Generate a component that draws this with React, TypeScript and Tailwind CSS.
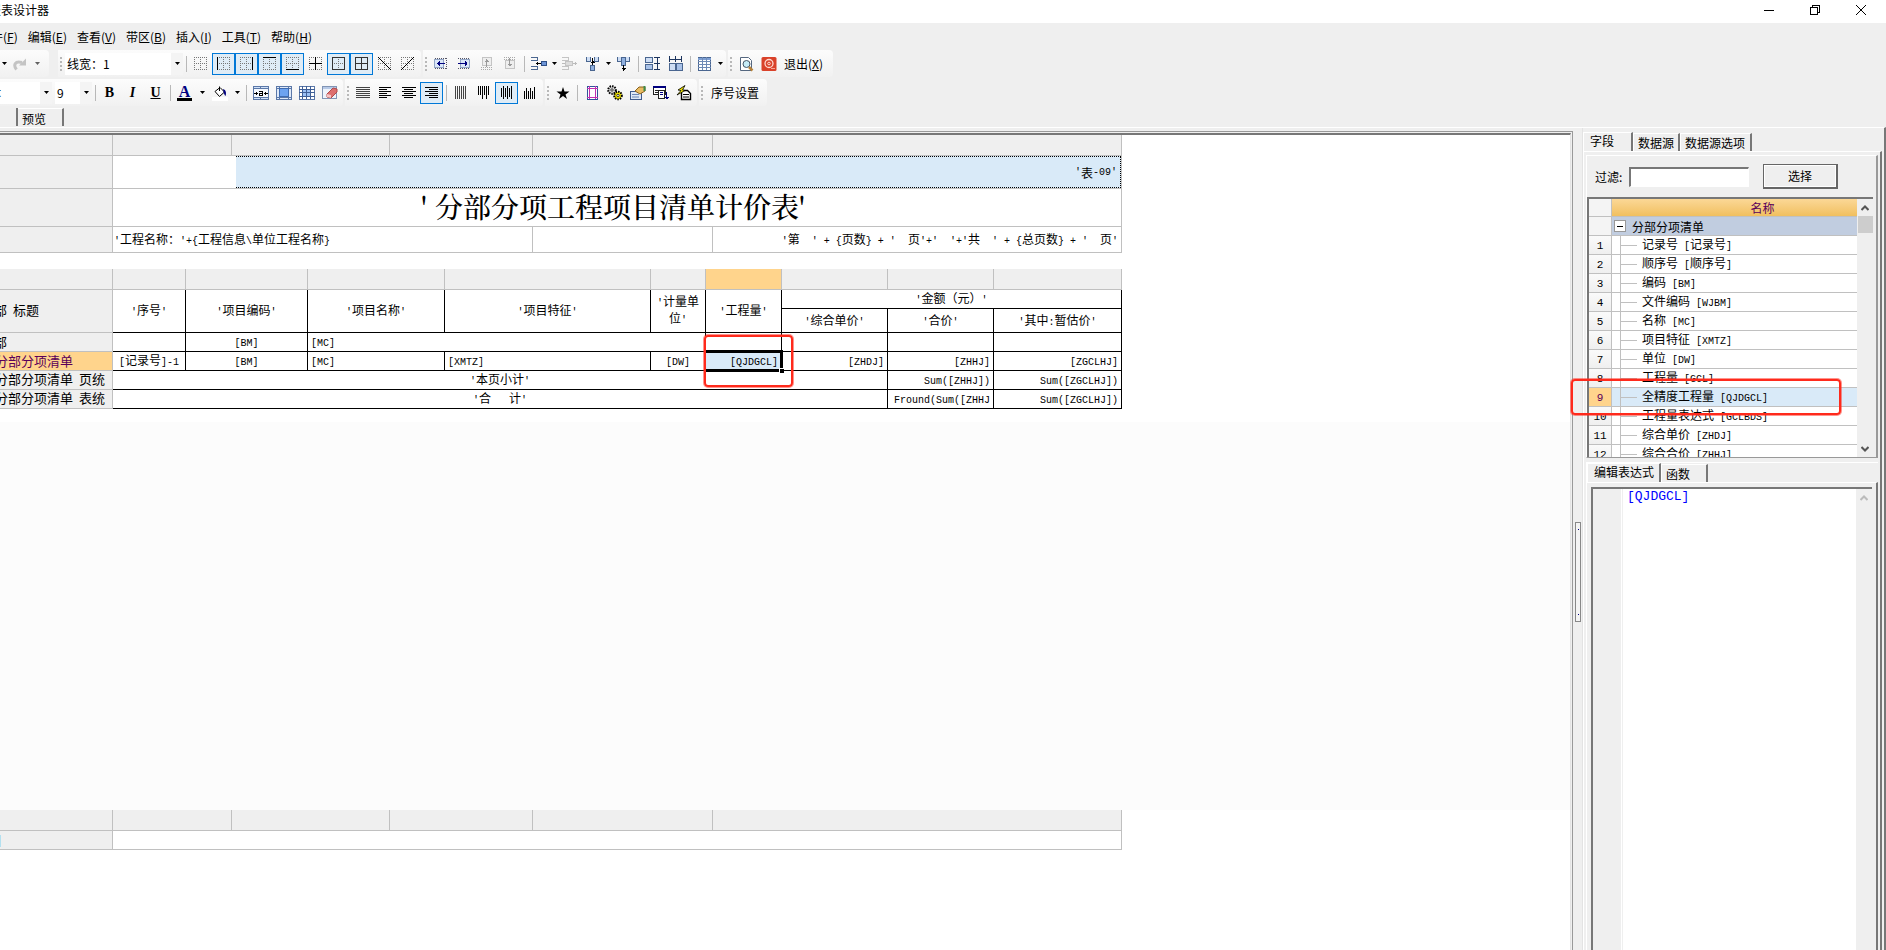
import { useState, type ReactNode } from 'react';

const UI = 'font-["Noto_Sans_CJK_SC",sans-serif]';

/* ── Text ───────────────────────────────────────────────────────────── */

// Latin runs are set half as wide as a Chinese character
const Mix = ({ children }: { children: string }) => (
  <>
    {children.split(/([\x20-\x7e]+)/).map((run, i) =>
      i % 2 ? (
        <span key={i} className="font-['Liberation_Mono',monospace] text-[10px]">{run}</span>
      ) : (
        run
      ),
    )}
  </>
);

/* ── Icons ──────────────────────────────────────────────────────────── */

const Svg = ({ children, smooth }: { children: ReactNode; smooth?: boolean }) => (
  <svg viewBox="0 0 16 16" className="h-4 w-4" fill="none" shapeRendering={smooth ? 'auto' : 'crispEdges'} aria-hidden="true">
    {children}
  </svg>
);

const Dots = () => (
  <path d="M1 1.5h13M1 7.5h13M1 13.5h13M1.5 1v13M7.5 1v13M13.5 1v13" stroke="#777" strokeDasharray="1 1" />
);

const BorderIcon = ({ d, color = '#000' }: { d?: string; color?: string }) => (
  <Svg>
    <Dots />
    {d && <path d={d} stroke={color} strokeWidth="1.4" />}
  </Svg>
);

const Lines = ({ rows, color = '#000' }: { rows: string; color?: string }) => (
  <Svg><path d={rows} stroke={color} /></Svg>
);

const Box = ({ x, y, w, h, fill = '#8fb0e0', stroke = '#4a6690' }: { x: number; y: number; w: number; h: number; fill?: string; stroke?: string }) => (
  <rect x={x + 0.5} y={y + 0.5} width={w} height={h} fill={fill} stroke={stroke} />
);

const InsertCol = ({ right }: { right?: boolean }) => (
  <Svg>
    <Box x={right ? 4 : 1} y={3} w={9} h={8} fill="#dbe7f8" stroke="#93a6c6" />
    <path d={right ? 'M2 7.5h9M9.5 5v5M10.5 6v3' : 'M4 7.5h8M5.5 6v3M6.5 5v5'} stroke="#00007f" />
    <path d={right ? 'M2 2.5h12M2 12.5h12' : 'M2 2.5h12M2 12.5h12M13.5 2v11'} stroke="#556" strokeDasharray="1 1" />
  </Svg>
);

const InsertRow = ({ down }: { down?: boolean }) => (
  <Svg>
    <Box x={3} y={down ? 4 : 1} w={9} h={8} fill="#eee" stroke="#c4c4c4" />
    <path d={down ? 'M7.5 2v8M5.5 8.5h4M6.5 9.5h2' : 'M7.5 3v8M5.5 5.5h4M6.5 4.5h2'} stroke="#999" />
    <path d={down ? 'M2 1.5h12M2 3.5h12' : 'M2 11.5h12M2 13.5h12'} stroke="#aaa" strokeDasharray="1 1" />
  </Svg>
);

const MergeH = ({ off }: { off?: boolean }) => (
  <Svg>
    <path d="M0 1.5h6v3h-6M0 10.5h6v3h-6" stroke={off ? '#c4c4c4' : '#4a6690'} />
    <path d={off ? 'M0 7.5h15M13.5 6v3' : 'M5 7.5h5M6.5 6v3'} stroke={off ? '#bbb' : '#000'} />
    <Box x={off ? 3 : 10} y={5} w={off ? 7 : 5} h={4} fill={off ? '#ddd' : '#6d94d6'} stroke={off ? '#c4c4c4' : '#2f4f86'} />
  </Svg>
);

const MergeV = ({ down }: { down?: boolean }) => (
  <Svg>
    <path d="M1.5 1v4h4v-4M9.5 1v4h4v-4" stroke="#4a6690" fill="#cfdef4" />
    {down ? (
      <>
        <Box x={5} y={1} w={4} h={8} />
        <path d="M7.5 9v6M5.5 12.5h4M6.5 13.5h2" stroke="#000" />
      </>
    ) : (
      <>
        <Box x={5} y={9} w={4} h={5} />
        <path d="M7.5 2v7M5.5 6.5h4M6.5 5.5h2" stroke="#000" />
      </>
    )}
  </Svg>
);

const icons = {
  redo: (
    <Svg smooth>
      <path d="M4.5 13.5C1 9 3 4.500 10 6.500" stroke="#c4c4c4" strokeWidth="3" />
      <path d="M14 2.500v7H7z" fill="#c4c4c4" />
    </Svg>
  ),
  sameHeight: (
    <Svg>
      <Box x={0} y={1} w={7} h={5} fill="#cfdef4" />
      <Box x={0} y={8} w={7} h={5} fill="#a9c2e8" />
      <path d="M9 1.500h6M9 7.500h6M9 13.500h6M12.500 1v12" stroke="#1d355f" />
    </Svg>
  ),
  sameWidth: (
    <Svg>
      <path d="M1.500 0v6M7.500 0v6M13.500 0v6M1 3.500h13" stroke="#1d355f" />
      <Box x={1} y={7} w={6} h={7} fill="#cfdef4" />
      <Box x={8} y={7} w={6} h={7} fill="#a9c2e8" />
    </Svg>
  ),
  table: (
    <Svg>
      <Box x={1} y={1} w={12} h={13} fill="#fff" />
      <path d="M1 2.500h13" stroke="#7d9fd4" strokeWidth="2" />
      <path d="M1 5.500h13M1 8.500h13M1 11.500h13M5.500 1v13M9.500 1v13" stroke="#6f8ab5" />
    </Svg>
  ),
  preview: (
    <Svg smooth>
      <path d="M2.500 1.500h8l3 3v10h-11z" fill="#fff" stroke="#55677f" />
      <circle cx="8.500" cy="8" r="3.500" fill="#c5ecf7" stroke="#456" />
      <path d="M11 11l3.500 3.500" stroke="#b5813a" strokeWidth="2.500" />
    </Svg>
  ),
  exit: (
    <Svg smooth>
      <rect x="0.500" y="1" width="15" height="14" rx="1.500" fill="#d9422a" />
      <circle cx="8" cy="7.500" r="4" stroke="#ffd9d0" strokeWidth="1.300" />
      <circle cx="8" cy="7.500" r="1.300" stroke="#ffd9d0" />
      <path d="M10 12.500h4" stroke="#f7a394" />
    </Svg>
  ),
  bucket: (
    <Svg smooth>
      <path d="M3 6.500l5-4 4.500 4.500-5 4.500z" fill="#fff" stroke="#000" />
      <path d="M7.500 6V1.500" stroke="#000" />
      <path d="M11 4c3 1 3.500 4 2.500 7-1-1-1.500-2.500-2-4z" fill="#00007f" />
      <path d="M0 14h16" stroke="#fff" strokeWidth="4" />
    </Svg>
  ),
  mergeText: (
    <Svg>
      <Box x={0} y={1} w={15} h={13} fill="#cfe0f7" stroke="#5b78a8" />
      <path d="M7.500 1v13" stroke="#5b78a8" />
      <path d="M1 4h14v8H1z" fill="#f4f8fe" />
      <path d="M0 3.500h16M0 12.500h16" stroke="#5b78a8" />
      <path d="M1 8.500h4M3.500 7v3M11 8.500h4M12.500 7v3" stroke="#000" />
      <path d="M6 6.500h3v4h-3v-2h3" stroke="#000" />
    </Svg>
  ),
  mergeCell: (
    <Svg>
      <Box x={0} y={1} w={15} h={13} fill="#dfe9f8" stroke="#5b78a8" />
      <path d="M3.500 1v13M12.500 1v13M0 3.500h16M0 12.500h16" stroke="#5b78a8" />
      <Box x={3} y={3} w={9} h={8} fill="#6da3f0" stroke="#3f6bb0" />
    </Svg>
  ),
  splitCell: (
    <Svg>
      <Box x={0} y={1} w={15} h={13} fill="#fff" stroke="#5b78a8" />
      <path d="M4 4h8v7H4z" fill="#9bc1f5" />
      <path d="M3.500 1v13M7.500 1v13M11.500 1v13M0 4.500h16M0 7.500h16M0 11.500h16" stroke="#3f5f96" />
    </Svg>
  ),
  eraser: (
    <Svg smooth>
      <rect x="0.500" y="1.500" width="14" height="12" fill="#eef3fb" stroke="#8195b5" />
      <path d="M1 3h13" stroke="#b7c9e6" strokeWidth="2" />
      <path d="M5 9l6-6 4 1v3l-6 6-4-1z" fill="#dd6f6f" stroke="#b04a4a" />
      <path d="M5 9l4 1v3l-4-1z" fill="#f6c4c4" />
    </Svg>
  ),
  page: (
    <Svg>
      <Box x={3} y={1} w={10} h={13} fill="#fff" stroke="#30559a" />
      <path d="M5.500 1v13M11.500 1v13M3 3.500h11M3 12.500h11" stroke="#c030b0" />
    </Svg>
  ),
  gears: (
    <Svg smooth>
      <circle cx="5" cy="5" r="3.800" fill="#ddd" stroke="#000" strokeWidth="2" strokeDasharray="1.500 1" />
      <circle cx="5" cy="5" r="1.200" fill="#fff" stroke="#333" />
      <circle cx="11" cy="10.500" r="3.800" fill="#f2e500" stroke="#000" strokeWidth="2" strokeDasharray="1.500 1" />
      <circle cx="11" cy="10.500" r="1.200" fill="#fff" stroke="#333" />
    </Svg>
  ),
  hand: (
    <Svg smooth>
      <rect x="0.500" y="6.500" width="11" height="8" fill="#dfe8f5" stroke="#3f5a8c" />
      <path d="M2 9.500h7M2 12h7" stroke="#6b86b6" />
      <path d="M5 6l4-4h6v4l-5 3z" fill="#e9bb62" stroke="#8a6320" />
      <path d="M13.500 1h2v5h-2z" fill="#3e8a4a" />
    </Svg>
  ),
  windows: (
    <Svg>
      <Box x={0} y={1} w={12} h={8} fill="#fff" stroke="#222" />
      <path d="M0 2h13" stroke="#00007f" strokeWidth="2" />
      <path d="M2 5.500h3M2 7.500h3" stroke="#222" />
      <Box x={5} y={5} w={6} h={8} fill="#fff" stroke="#222" />
      <path d="M7 7.500h3M7 9.500h3M13.500 7v7M11.500 12.500h4M12.500 13.500h2" stroke="#00007f" />
    </Svg>
  ),
  lightning: (
    <Svg smooth>
      <path d="M5.500 5.500h6l3 3v6h-9z" fill="#fff" stroke="#000" strokeWidth="1.400" />
      <path d="M7 9.500h6M7 12h6" stroke="#000" />
      <path d="M9 0.500L2 5l3 .5L1 10l8-4.500L6.500 5z" fill="#f2e500" stroke="#000" strokeWidth=".8" />
    </Svg>
  ),
};

/* ── Toolbar parts ──────────────────────────────────────────────────── */

const Band = ({ children }: { children: ReactNode }) => (
  <div className="flex h-[27px] shrink-0 items-center rounded-r-sm bg-linear-to-b from-[#fcfcfc] to-[#f1f1f1] pr-[2px]">{children}</div>
);

const Grip = () => (
  <span className="flex w-[6px] shrink-0 flex-col items-center gap-[2px]">
    {[0, 1, 2, 3].map(i => <i key={i} className="h-[2px] w-[2px] bg-[#b8b8b8]" />)}
  </span>
);

const Sep = () => <span className="mr-[2px] ml-[3px] h-4 w-px shrink-0 bg-[#b8b8b8]" />;

const Tool = ({ label, on, children }: { label: string; on?: boolean; children: ReactNode }) => {
  const [pressed, setPressed] = useState(!!on);
  return (
    <button
      aria-label={label}
      aria-pressed={pressed}
      onClick={() => on !== undefined && setPressed(!pressed)}
      className={`flex h-[22px] w-[23px] shrink-0 items-center justify-center ${pressed ? 'border border-[#0078d7] bg-[#dfecf6]' : ''}`}
    >
      {children}
    </button>
  );
};

const Caret = () => (
  <svg viewBox="0 0 5 3" className="h-[3px] w-[5px]" aria-hidden="true"><path d="M0 0h5L2.500 3z" fill="#000" /></svg>
);

const Drop = ({ label, wide }: { label: string; wide?: boolean }) => (
  <button aria-label={label} className={`flex h-[22px] shrink-0 items-center justify-center ${wide ? 'w-3' : 'w-2'}`}>
    <Caret />
  </button>
);

const Combo = ({ label, value, width, pull = '' }: { label: string; value: string; width: string; pull?: string }) => (
  <div className={`relative flex h-[22px] shrink-0 items-center bg-white ${width}`}>
    <select aria-label={label} className={`h-full w-full appearance-none text-xs outline-none ${pull}`}>
      <option>{value}</option>
    </select>
    <span className="pointer-events-none absolute inset-y-0 right-0 flex w-3 items-center justify-center bg-[#f4f4f4]">
      <Caret />
    </span>
  </div>
);

const MENUS = [
  ['编辑', 'E'], ['查看', 'V'], ['带区', 'B'], ['插入', 'I'], ['工具', 'T'], ['帮助', 'H'],
];

const MenuBar = () => (
  <nav className="flex h-[27px] items-center gap-[10px] overflow-hidden text-xs">
    <button className="-ml-[21px] whitespace-nowrap">文件(<u>F</u>)</button>
    {MENUS.map(([name, key]) => (
      <button key={key} className="whitespace-nowrap">{name}(<u>{key}</u>)</button>
    ))}
  </nav>
);

const Toolbars = () => (
  <div className="flex flex-col gap-[2px]">
    <div className="flex gap-[2px]">
      <Band>
        <Drop label="撤消选项" />
        <Tool label="恢复">{icons.redo}</Tool>
        <span className="mr-1 opacity-60"><Drop label="恢复选项" wide /></span>
      </Band>
      <span className="w-[5px]" />
      <Band>
        <Grip />
        <Combo label="线宽" value="线宽：1" width="w-[118px] ml-px pl-[2px]" />
        <Sep />
        <Tool label="无边框"><BorderIcon /></Tool>
        <Tool label="左边框" on><BorderIcon d="M1.500 1v13" /></Tool>
        <Tool label="右边框" on><BorderIcon d="M13.500 1v13" /></Tool>
        <Tool label="上边框" on><BorderIcon d="M1 1.500h13" /></Tool>
        <Tool label="下边框" on><BorderIcon d="M1 13.500h13" /></Tool>
        <Tool label="内边框"><BorderIcon d="M1 7.500h13M7.500 1v13" /></Tool>
        <Tool label="外边框" on><BorderIcon d="M1.500 1.500h12v12h-12z" color="#333" /></Tool>
        <Tool label="全部边框" on><BorderIcon d="M1.500 1.500h12v12h-12zM1 7.500h13M7.500 1v13" color="#333" /></Tool>
        <Tool label="左斜线"><BorderIcon d="M1 1l13 13" /></Tool>
        <Tool label="右斜线"><BorderIcon d="M14 1L1 14" /></Tool>
      </Band>
      <Band>
        <Grip />
        <Tool label="左侧插入列"><InsertCol /></Tool>
        <Tool label="右侧插入列"><InsertCol right /></Tool>
        <Tool label="上方插入行"><InsertRow /></Tool>
        <Tool label="下方插入行"><InsertRow down /></Tool>
        <Sep />
        <Tool label="左右合并"><MergeH /></Tool>
        <Drop label="左右合并选项" />
        <Tool label="左右拆分"><MergeH off /></Tool>
        <Tool label="上下合并"><MergeV /></Tool>
        <Drop label="上下合并选项" />
        <Tool label="上下拆分"><MergeV down /></Tool>
        <Sep />
        <Tool label="等高">{icons.sameHeight}</Tool>
        <Tool label="等宽">{icons.sameWidth}</Tool>
        <Sep />
        <Tool label="表格">{icons.table}</Tool>
        <Drop label="表格选项" />
      </Band>
      <Band>
        <Grip />
        <Tool label="打印预览">{icons.preview}</Tool>
        <Tool label="关闭">{icons.exit}</Tool>
        <button className="pr-2 pl-1 text-xs">退出(<u>X</u>)</button>
      </Band>
    </div>

    <div className="flex gap-[2px]">
      <Band>
        <div className="w-[52px] overflow-hidden">
          <Combo label="字体" value="宋体" width="w-[52px]" pull="-ml-[23px]" />
        </div>
        <Combo label="字号" value="9" width="ml-[3px] w-[37px] pl-[2px]" />
        <Sep />
        <Tool label="加粗"><b className="font-['Liberation_Serif',serif] text-sm font-black">B</b></Tool>
        <Tool label="倾斜"><b className="font-['Liberation_Serif',serif] text-sm italic">I</b></Tool>
        <Tool label="下划线"><b className="font-['Liberation_Serif',serif] text-sm underline">U</b></Tool>
        <Sep />
        <Tool label="字体颜色">
          <b className="border-b-[3px] border-black px-[2px] font-['Liberation_Serif',serif] text-base leading-[13px] text-[#00007f]">A</b>
        </Tool>
        <Drop label="字体颜色选项" wide />
        <Tool label="填充颜色">{icons.bucket}</Tool>
        <Drop label="填充颜色选项" wide />
        <Sep />
        <Tool label="合并文字">{icons.mergeText}</Tool>
        <Tool label="合并单元格">{icons.mergeCell}</Tool>
        <Tool label="拆分单元格">{icons.splitCell}</Tool>
        <Tool label="清除">{icons.eraser}</Tool>
      </Band>
      <Band>
        <Grip />
        <Tool label="两端对齐"><Lines color="#444" rows="M1 2.500h14M1 4.500h14M1 6.500h14M1 8.500h14M1 10.500h14M1 12.500h14" /></Tool>
        <Tool label="左对齐"><Lines rows="M1 2.500h12M1 4.500h8M1 6.500h12M1 8.500h8M1 10.500h12M1 12.500h8" /></Tool>
        <Tool label="居中"><Lines rows="M1 2.500h14M3 4.500h9M1 6.500h14M3 8.500h9M1 10.500h14M3 12.500h9" /></Tool>
        <Tool label="右对齐" on><Lines rows="M1 2.500h13M5 4.500h9M1 6.500h13M5 8.500h9M1 10.500h13M5 12.500h9" /></Tool>
        <Sep />
        <Tool label="垂直分布"><Lines color="#444" rows="M2.500 1v13M4.500 1v13M6.500 1v13M8.500 1v13M10.500 1v13M12.500 1v13" /></Tool>
        <Tool label="顶端对齐"><Lines rows="M2.500 1v9M4.500 1v9M6.500 1v13M8.500 1v9M10.500 1v13M12.500 1v9" /></Tool>
        <Tool label="垂直居中" on><Lines rows="M2.500 3v9M4.500 1v13M6.500 3v9M8.500 1v13M10.500 3v9M12.500 1v13" /></Tool>
        <Tool label="底端对齐"><Lines rows="M2.500 6v8M4.500 3v11M6.500 6v8M8.500 3v11M10.500 6v8M12.500 2v12" /></Tool>
      </Band>
      <Band>
        <Grip />
        <Tool label="收藏">
          <Svg smooth><path d="M8 2l1.500 4.500h5l-4 3 1.500 4.500L8 11l-4 3 1.500-4.500-4-3h5z" fill="#000" /></Svg>
        </Tool>
        <Sep />
        <Tool label="页面设置">{icons.page}</Tool>
        <Tool label="选项">{icons.gears}</Tool>
        <Tool label="属性">{icons.hand}</Tool>
        <Tool label="窗口">{icons.windows}</Tool>
        <Tool label="脚本">{icons.lightning}</Tool>
      </Band>
      <Band>
        <Grip />
        <button className="px-[6px] text-xs">序号设置</button>
      </Band>
    </div>
  </div>
);

/* ── Report design area ─────────────────────────────────────────────── */

const HEAD = 'border-r border-b border-[#c0c0c0] bg-[#efefef]';
const SIDE = `${HEAD} text-[13px] leading-[14px] text-left font-normal overflow-hidden`;
const GRAY = 'border-r border-b border-[#c0c0c0] bg-white';
const CELL = 'border-r border-b border-black bg-white';

const Cols = ({ widths }: { widths: number[] }) => (
  <colgroup>{widths.map((w, i) => <col key={i} style={{ width: w }} />)}</colgroup>
);

const PAGE_COLS = [113, 119, 158, 143, 180, 409];
const BODY_COLS = [113, 73, 122, 137, 206, 55, 76, 106, 106, 128];
const TABLE = 'w-[1122px] table-fixed border-separate border-spacing-0 text-xs leading-[13px] whitespace-pre';

const Side = ({ text, pull = '-ml-[5px]' }: { text: string; pull?: string }) => (
  <div className={pull}><Mix>{text}</Mix></div>
);

const PageHeader = () => (
  <table className={TABLE}>
    <Cols widths={PAGE_COLS} />
    <tbody>
      <tr className="h-[21px]">{PAGE_COLS.map((_, i) => <td key={i} className={HEAD} />)}</tr>
      <tr className="h-[33px]">
        <td className={HEAD} />
        <td colSpan={5} className={`${GRAY} pl-[123px]`}>
          <div className="flex h-8 items-center justify-end border border-l-0 border-dotted border-black bg-[#d9eaf8] pr-[3px]">
            <Mix>'表-09'</Mix>
          </div>
        </td>
      </tr>
      <tr className="h-[38px]">
        <td className={HEAD} />
        <td colSpan={5} className={`${GRAY} font-['Noto_Serif_CJK_SC','Noto_Sans_CJK_SC',serif] text-[28px] leading-[30px] font-medium`}>
          <div className="flex h-[37px] items-center justify-center pb-1">
            <span className="w-[14px]">'</span>分部分项工程项目清单计价表<span className="w-[14px]">'</span>
          </div>
        </td>
      </tr>
      <tr className="h-[26px]">
        <td className={HEAD} />
        <td colSpan={3} className={`${GRAY} pl-px`}><Mix>{"'工程名称：'+{工程信息\\单位工程名称}"}</Mix></td>
        <td className={GRAY} />
        <td className={`${GRAY} pr-[3px] text-right`}>
          <Mix>{"'第  ' + {页数} + '  页'+'  '+'共  ' + {总页数} + '  页'"}</Mix>
        </td>
      </tr>
    </tbody>
  </table>
);

const Body = () => (
  <table className={`${TABLE} mt-4`}>
    <Cols widths={BODY_COLS} />
    <tbody>
      <tr className="h-[21px]">
        {BODY_COLS.map((_, i) => (
          <td key={i} className={i === 6 ? 'border-r border-b border-[#c0c0c0] bg-[#ffd48c]' : HEAD} />
        ))}
      </tr>
      <tr className="h-[19px] text-center">
        <th rowSpan={2} className={SIDE}><Side text="部 标题" pull="-ml-[6px]" /></th>
        {["'序号'", "'项目编码'", "'项目名称'", "'项目特征'"].map(t => (
          <td key={t} rowSpan={2} className={CELL}><Mix>{t}</Mix></td>
        ))}
        <td rowSpan={2} className={`${CELL} px-1 leading-[14px] whitespace-pre-wrap`}><Mix>'计量单位'</Mix></td>
        <td rowSpan={2} className={CELL}><Mix>'工程量'</Mix></td>
        <td colSpan={3} className={CELL}><Mix>'金额（元）'</Mix></td>
      </tr>
      <tr className="h-6 text-center">
        {["'综合单价'", "'合价'", "'其中:暂估价'"].map(t => <td key={t} className={CELL}><Mix>{t}</Mix></td>)}
      </tr>
      <tr className="h-[19px]">
        <th className={SIDE}><Side text="部" pull="-ml-[6px]" /></th>
        <td className={CELL} />
        <td className={`${CELL} text-center`}><Mix>[BM]</Mix></td>
        <td colSpan={3} className={`${CELL} pl-[3px]`}><Mix>[MC]</Mix></td>
        <td className={CELL} /><td className={CELL} /><td className={CELL} /><td className={CELL} />
      </tr>
      <tr className="h-[19px]">
        <th className="overflow-hidden border-r border-b border-[#c0c0c0] bg-[#ffd48c] text-left text-[13px] leading-[14px] font-normal text-[#5a005a]">
          <Side text="分部分项清单" />
        </th>
        <td className={`${CELL} text-center`}><Mix>[记录号]-1</Mix></td>
        <td className={`${CELL} text-center`}><Mix>[BM]</Mix></td>
        <td className={`${CELL} pl-[3px]`}><Mix>[MC]</Mix></td>
        <td className={`${CELL} pl-[3px]`}><Mix>[XMTZ]</Mix></td>
        <td className={`${CELL} text-center`}><Mix>[DW]</Mix></td>
        <td className="relative border-r border-b border-black bg-[#d9eaf8] pr-[3px] text-right">
          <Mix>[QJDGCL]</Mix>
          {/* selection frame, fill handle and callout */}
          <span className="absolute -inset-y-[2px] -right-[2px] left-0 border-[3px] border-l-0 border-black" />
          <span className="absolute -right-[3px] -bottom-[3px] h-[5px] w-[5px] border-t border-l border-white bg-black" />
          <span className="absolute -top-[17px] -left-[2px] z-10 h-[52px] w-[89px] rounded-sm border-2 border-[#ff2a1c] ring-1 ring-[#ff2a1c]/50" />
        </td>
        {['[ZHDJ]', '[ZHHJ]', '[ZGCLHJ]'].map(t => (
          <td key={t} className={`${CELL} pr-[3px] text-right`}><Mix>{t}</Mix></td>
        ))}
      </tr>
      <tr className="h-[19px]">
        <th className={SIDE}><Side text="分部分项清单 页统" /></th>
        <td colSpan={7} className={`${CELL} text-center`}><Mix>'本页小计'</Mix></td>
        <td className={`${CELL} pr-[3px] text-right`}><Mix>Sum([ZHHJ])</Mix></td>
        <td className={`${CELL} pr-[3px] text-right`}><Mix>Sum([ZGCLHJ])</Mix></td>
      </tr>
      <tr className="h-[19px]">
        <th className={SIDE}><Side text="分部分项清单 表统" /></th>
        <td colSpan={7} className={`${CELL} text-center`}><Mix>{"'合   计'"}</Mix></td>
        <td className={`${CELL} overflow-hidden pr-[3px] text-right`}><Mix>Fround(Sum([ZHHJ</Mix></td>
        <td className={`${CELL} pr-[3px] text-right`}><Mix>Sum([ZGCLHJ])</Mix></td>
      </tr>
    </tbody>
  </table>
);

const PageFooter = () => (
  <table className={TABLE}>
    <Cols widths={PAGE_COLS} />
    <tbody>
      <tr className="h-[21px]">{PAGE_COLS.map((_, i) => <td key={i} className={HEAD} />)}</tr>
      <tr className="h-[19px]">
        <th className={SIDE}><Side text="目" pull="-ml-[11px]" /></th>
        <td colSpan={5} className={GRAY} />
      </tr>
    </tbody>
  </table>
);

/* ── Side panel ─────────────────────────────────────────────────────── */

const FIELDS = [
  '记录号 [记录号]', '顺序号 [顺序号]', '编码 [BM]', '文件编码 [WJBM]', '名称 [MC]', '项目特征 [XMTZ]',
  '单位 [DW]', '工程量 [GCL]', '全精度工程量 [QJDGCL]', '工程量表达式 [GCLBDS]', '综合单价 [ZHDJ]', '综合合价 [ZHHJ]',
];

const PANEL_TABS = [
  { name: '字段', width: 'w-[50px]' },
  { name: '数据源', width: 'w-[47px]' },
  { name: '数据源选项', width: 'w-[72px]' },
];

const EDIT_TABS = [
  { name: '编辑表达式', width: 'w-[74px]' },
  { name: '函数', width: 'w-[47px]' },
];

const Chevron = ({ up, color = '#555' }: { up?: boolean; color?: string }) => (
  <svg viewBox="0 0 8 6" className="h-[6px] w-2" fill="none" aria-hidden="true">
    <path d={up ? 'M.5 5L4 1.500 7.500 5' : 'M.5 1L4 4.500 7.500 1'} stroke={color} strokeWidth="2" />
  </svg>
);

const Tab = ({ on, width, onClick, children }: { on: boolean; width: string; onClick: () => void; children: string }) => (
  <button
    onClick={onClick}
    className={`border-t border-l border-r-2 border-t-white border-l-white border-r-[#777] text-left text-xs leading-4 whitespace-nowrap ${width} ${on ? 'h-5 pb-1 pl-[6px]' : 'mt-px h-[18px] pl-1'}`}
  >
    {children}
  </button>
);

const FieldGrid = () => {
  const [current, setCurrent] = useState(8);
  return (
    <div className="mr-[3px] flex h-[260px] overflow-hidden border-t-2 border-l-2 border-[#777] bg-white">
      <div className="min-w-0 flex-1 overflow-hidden">
        <table className="w-full table-fixed border-separate border-spacing-0 text-xs leading-[13px] whitespace-pre">
          <colgroup><col className="w-[23px]" /><col /></colgroup>
          <thead>
            <tr className="h-[18px]">
              <th className="border-r border-b border-[#c0c0c0] bg-[#f4f4f4]" />
              <th className="border-b border-[#c0c0c0] bg-linear-to-b from-[#fbd896] to-[#f1bf5e] pl-14 font-normal text-[#5a005a]">名称</th>
            </tr>
          </thead>
          <tbody>
            <tr className="h-[19px]">
              <td className="border-r border-b border-[#c0c0c0] bg-[#f4f4f4]" />
              <td className="border-b border-[#c0c0c0] bg-[#c1cde0] pl-[2px]">
                <div className="flex items-center gap-[6px]">
                  <button aria-label="折叠" className="flex h-3 w-3 items-center justify-center border border-[#999] bg-white">
                    <i className="h-px w-[6px] bg-black" />
                  </button>
                  分部分项清单
                </div>
              </td>
            </tr>
            {FIELDS.map((f, i) => (
              <tr key={f} className="h-[19px]" onClick={() => setCurrent(i)}>
                <td className={`border-r border-b border-[#c0c0c0] text-center ${i === current ? 'bg-[#ffd48c] text-[#5a005a]' : 'bg-linear-to-b from-[#fafafa] to-[#efefef]'}`}>
                  <span className="font-['Liberation_Mono',monospace] text-[11px]">{i + 1}</span>
                </td>
                <td className={`border-b border-[#c0c0c0] pl-2 ${i === current ? 'bg-[#d9eaf8]' : 'bg-white'}`}>
                  <div className="flex h-[18px] items-center border-l border-[#c0c0c0]">
                    <i className="mr-[5px] h-px w-4 bg-[#c0c0c0]" />
                    <span><Mix>{f}</Mix></span>
                  </div>
                </td>
              </tr>
            ))}
          </tbody>
        </table>
      </div>
      <div className="flex w-4 flex-col items-center bg-[#efefef]">
        <span className="flex h-[17px] items-center"><Chevron up /></span>
        <span className="h-[17px] w-[15px] bg-[#cdcdcd]" />
        <span className="mt-auto flex h-[17px] items-center"><Chevron /></span>
      </div>
    </div>
  );
};

const SidePanel = () => {
  const [tab, setTab] = useState('字段');
  const [editTab, setEditTab] = useState('编辑表达式');
  return (
    <aside className="flex w-[301px] shrink-0 flex-col pt-1 pr-[2px]">
      <div className="flex">
        {PANEL_TABS.map(t => (
          <Tab key={t.name} on={t.name === tab} width={t.width} onClick={() => setTab(t.name)}>{t.name}</Tab>
        ))}
      </div>
      <div className="-mt-px flex min-h-0 flex-1 flex-col border-t border-r-2 border-l border-t-white border-r-[#777] border-l-white pt-[3px] pr-[2px] pl-[2px]">
        <div className="relative border border-r-2 border-b-[#999] border-t-white border-r-[#999] border-l-white">
          <div className="flex h-[41px] items-center pl-2 text-xs">
            <label htmlFor="filter" className="w-[34px]">过滤:</label>
            <input id="filter" className="h-5 w-[120px] border-t-2 border-r border-b border-l-2 border-t-[#777] border-r-white border-b-white border-l-[#777] bg-white px-1 outline-none" />
            <button className="ml-[14px] h-[25px] w-[75px] border border-r-2 border-b-2 border-[#666] leading-5 ring-1 ring-white ring-inset">选择</button>
          </div>
          <FieldGrid />
          {/* callout round the current field */}
          <span className="pointer-events-none absolute top-[223px] -left-[16px] z-10 h-9 w-[270px] rounded-sm border-2 border-[#ff2a1c] ring-1 ring-[#ff2a1c]/50" />
        </div>
        <div className="mt-1 flex min-h-0 flex-1 flex-col border-t border-l border-white">
          <div className="flex">
            {EDIT_TABS.map(t => (
              <Tab key={t.name} on={t.name === editTab} width={t.width} onClick={() => setEditTab(t.name)}>{t.name}</Tab>
            ))}
          </div>
          <div className="-mt-px flex min-h-0 flex-1 border-t border-r-2 border-t-white border-r-[#777] pt-1 pr-1 pl-[4px]">
            <div className="flex min-w-0 flex-1 border-t-2 border-l-2 border-[#777] bg-white">
              <div className="w-7 bg-[#efefef]" />
              <textarea
                aria-label="表达式"
                defaultValue="[QJDGCL]"
                className="ml-px min-w-0 flex-1 resize-none border-l border-[#efefef] pl-1 font-['Liberation_Mono',monospace] text-[13px] leading-4 text-[#0000ff] outline-none"
              />
              <div className="flex w-4 justify-center bg-[#efefef] pt-[6px]"><Chevron up color="#bbb" /></div>
            </div>
          </div>
        </div>
      </div>
    </aside>
  );
};

/* ── Window ─────────────────────────────────────────────────────────── */

const App = () => (
  <div className={`${UI} flex h-screen flex-col overflow-hidden bg-[#efefef] text-xs text-black`}>
    <header className="flex h-[23px] shrink-0 items-center justify-between bg-white pb-[3px]">
      <h1 className="-ml-[11px]">报表设计器</h1>
      <div className="flex gap-[36px] pr-5">
        <button aria-label="最小化">
          <svg viewBox="0 0 10 10" className="h-[10px] w-[10px]" shapeRendering="crispEdges"><path d="M0 5.500h10" stroke="#000" /></svg>
        </button>
        <button aria-label="还原">
          <svg viewBox="0 0 10 10" className="h-[10px] w-[10px]" fill="none" stroke="#000" shapeRendering="crispEdges">
            <path d="M.5 2.500h7v7h-7zM2.500 2.500v-2h7v7h-2" />
          </svg>
        </button>
        <button aria-label="关闭窗口">
          <svg viewBox="0 0 10 10" className="h-[10px] w-[10px]" stroke="#000"><path d="M0 0l10 10M10 0L0 10" /></svg>
        </button>
      </div>
    </header>

    <MenuBar />
    <Toolbars />

    <div className="mt-[2px] flex h-[19px] shrink-0">
      <button aria-label="设计" className="h-[18px] w-[18px] border-r-2 border-[#777]" />
      <button className="h-[18px] w-[46px] border-t border-r-2 border-t-white border-r-[#777] pl-1 text-left leading-5">预览</button>
    </div>

    <div className="flex min-h-0 flex-1 border-t border-r-2 border-t-white border-r-[#777]">
      <main className="mt-[3px] mr-px flex min-w-0 flex-1 border-t border-r border-[#999]">
        <div className="mt-px mr-px flex min-w-0 flex-1 flex-col overflow-hidden border-t-2 border-r border-t-[#777] border-r-[#e3e3e3] bg-white">
          <PageHeader />
          <Body />
          <div className="mt-[13px] h-[388px] shrink-0 bg-[#fcfcfc]" />
          <PageFooter />
        </div>
      </main>
      <div className="flex w-[9px] shrink-0 flex-col items-center border-r border-[#e3e3e3] pt-[394px]">
        <button aria-label="收起面板" className="flex h-[100px] w-[6px] flex-col items-center justify-between border border-[#888] bg-[#f4f4f4] py-[6px]">
          <i className="h-px w-px bg-[#00007f]" />
          <i className="h-px w-px bg-[#00007f]" />
        </button>
      </div>
      <SidePanel />
    </div>
  </div>
);

export default App;
